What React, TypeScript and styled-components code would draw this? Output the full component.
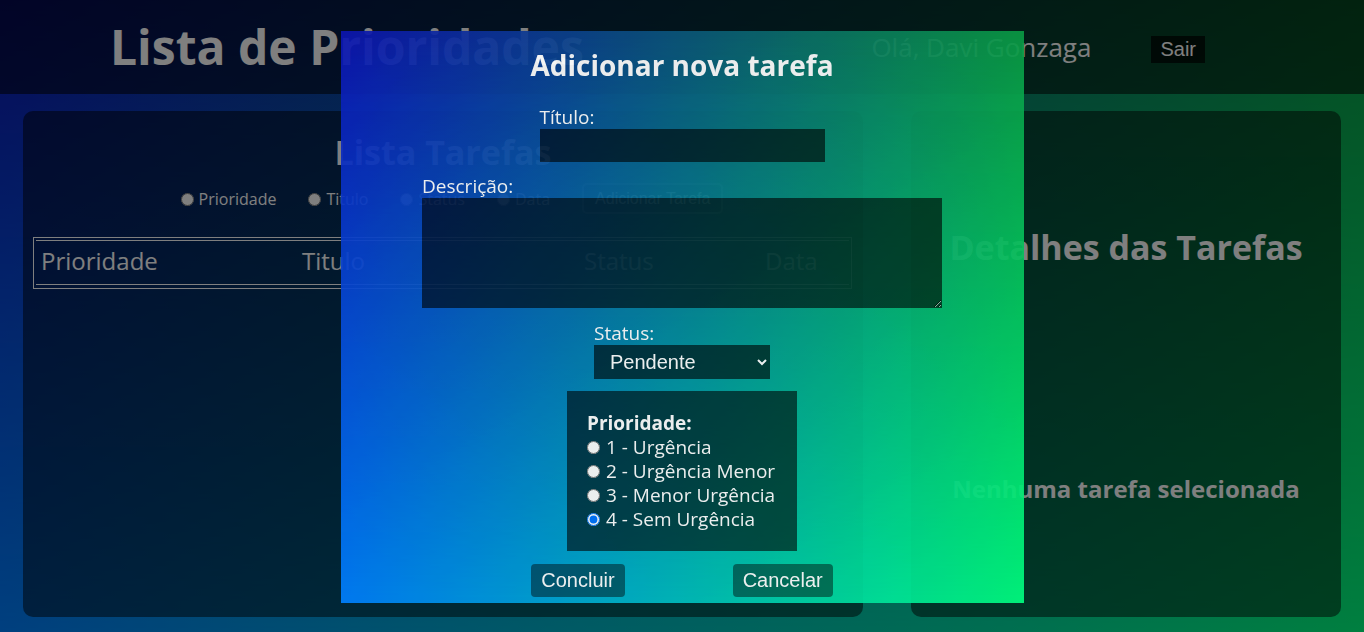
import React from 'react';
import styled, { createGlobalStyle, css } from 'styled-components';

const TL = '#0c14b0';
const TR = '#0a9a44';
const BL = '#0080ff';
const BR = '#00ff80';

const bilinear = css`
  position: relative;
  isolation: isolate;
  background: linear-gradient(to right, ${BL}, ${BR});
  &::before {
    content: '';
    position: absolute;
    inset: 0;
    z-index: -1;
    pointer-events: none;
    background: linear-gradient(to right, ${TL}, ${TR});
    -webkit-mask-image: linear-gradient(to bottom, #000, transparent);
    mask-image: linear-gradient(to bottom, #000, transparent);
  }
`;

const Global = createGlobalStyle`
  html, body { margin: 0; padding: 0; height: 100%; }
  body { font-family: "Open Sans", "Noto Sans", sans-serif; overflow: hidden; color: #fff; }
  * { box-sizing: border-box; }
`;

const Page = styled.div`
  ${bilinear};
  height: 100vh;
  display: flex;
  flex-direction: column;
`;

const Header = styled.header`
  height: 94px;
  flex: none;
  display: flex;
  align-items: center;
  padding: 0 159px 0 110px;
  background: rgba(0, 0, 0, 0.55);
`;

const AppTitle = styled.h1`
  margin: 0;
  font-size: 48px;
  font-weight: 700;
  line-height: 1.2;
`;

const UserArea = styled.div`
  margin-left: auto;
  display: flex;
  align-items: center;
  gap: 60px;
`;

const UserName = styled.span`
  font-size: 26px;
`;

const SmallButton = styled.button`
  font-family: "Liberation Sans", Arial, sans-serif;
  font-size: 20px;
  color: #fff;
  background: rgba(0, 0, 0, 0.7);
  border: none;
  height: 27px;
  padding: 0 9px;
  margin-top: 4px;
`;

const Main = styled.main`
  flex: 1;
  display: flex;
  gap: 48px;
  padding: 17px 23px 15px;
`;

const Panel = styled.section<{ $w: number }>`
  width: ${(p) => p.$w}px;
  flex: none;
  background: rgba(0, 0, 0, 0.5);
  border-radius: 10px;
  display: flex;
  flex-direction: column;
  align-items: center;
`;

const PanelTitle = styled.h2<{ $top: number }>`
  margin: ${(p) => p.$top}px 0 0;
  font-size: 34px;
  font-weight: 700;
  line-height: 46px;
`;

const SortRow = styled.div`
  margin: 8px 0 0 18px;
  display: flex;
  align-items: center;
  gap: 32px;
  font-size: 16px;
`;

const SortOption = styled.label`
  display: flex;
  align-items: center;
  gap: 5px;
  padding-top: 1px;
  input { margin: 0; width: 13px; height: 13px; }
`;

const OutlineButton = styled.button`
  font-family: "Liberation Sans", Arial, sans-serif;
  font-size: 16px;
  color: #fff;
  height: 31px;
  padding: 0 11px;
  border: 2px solid rgba(255, 255, 255, 0.35);
  border-radius: 5px;
  background: rgba(0, 0, 0, 0.3);
`;

const Table = styled.div`
  align-self: stretch;
  margin: 23px 11px 0 10px;
  border: 1px solid #fff;
  padding: 2px 2px 3px;
`;

const HeadRow = styled.div`
  border-top: 1px solid #fff;
  border-bottom: 1px solid #fff;
  display: grid;
  grid-template-columns: 261px 282px 181px 1fr;
  padding: 0 0 5px 5px;
  height: 45px;
  align-items: center;
  font-size: 24px;
`;

const EmptyText = styled.p`
  margin: 202px 0 0;
  font-size: 24px;
  font-weight: 700;
  line-height: 33px;
`;

const Backdrop = styled.div`
  position: fixed;
  inset: 0;
  padding-top: 2px;
  background: rgba(0, 0, 0, 0.5);
  display: flex;
  align-items: center;
  justify-content: center;
`;

const Modal = styled.div`
  ${bilinear};
  width: 683px;
  opacity: 0.92;
  display: flex;
  flex-direction: column;
  align-items: center;
  padding: 15px 0 6px;
`;

const ModalTitle = styled.h2`
  margin: 0 0 21px;
  font-size: 28px;
  font-weight: 700;
  line-height: 38px;
`;

const Field = styled.div<{ $gap?: number }>`
  display: flex;
  flex-direction: column;
  align-items: flex-start;
  margin-top: ${(p) => p.$gap ?? 0}px;
`;

const FieldLabel = styled.label`
  font-size: 19px;
  line-height: 24px;
`;

const darkField = css`
  background: rgba(0, 0, 0, 0.62);
  border: none;
  color: #fff;
  outline: none;
`;

const TextInput = styled.input`
  ${darkField};
  width: 285px;
  height: 33px;
`;

const TextArea = styled.textarea`
  ${darkField};
  width: 520px;
  height: 110px;
  display: block;
`;

const Select = styled.select`
  ${darkField};
  width: 176px;
  height: 34px;
  font-family: "Liberation Sans", Arial, sans-serif;
  font-size: 20px;
  padding: 0 4px 0 12px;
  option { background: #033; }
`;

const PriorityBox = styled.fieldset`
  margin: 12px 0 0;
  width: 230px;
  border: none;
  background: rgba(0, 0, 0, 0.6);
  padding: 20px;
  font-size: 19px;
  line-height: 24px;
`;

const PriorityTitle = styled.div`
  font-weight: 700;
`;

const PriorityOption = styled.label`
  display: flex;
  align-items: center;
  gap: 6px;
  white-space: nowrap;
  input { margin: 0; width: 13px; height: 13px; }
`;

const ButtonRow = styled.div`
  margin-top: 13px;
  display: flex;
  gap: 108px;
`;

const ModalButton = styled.button`
  font-family: "Liberation Sans", Arial, sans-serif;
  font-size: 20px;
  color: #fff;
  height: 33px;
  padding: 0 10px;
  border: none;
  border-radius: 4px;
  background: rgba(0, 0, 0, 0.45);
`;

export default function App() {
  return (
    <>
      <Global />
      <Page>
        <Header>
          <AppTitle>Lista de Prioridades</AppTitle>
          <UserArea>
            <UserName>Olá, Davi Gonzaga</UserName>
            <SmallButton>Sair</SmallButton>
          </UserArea>
        </Header>
        <Main>
          <Panel $w={840}>
            <PanelTitle $top={18}>Lista Tarefas</PanelTitle>
            <SortRow>
              {['Prioridade', 'Titulo', 'Status', 'Data'].map((s) => (
                <SortOption key={s}>
                  <input type="radio" name="sort" />
                  {s}
                </SortOption>
              ))}
              <OutlineButton>Adicionar Tarefa</OutlineButton>
            </SortRow>
            <Table>
              <HeadRow>
                <span>Prioridade</span>
                <span>Titulo</span>
                <span>Status</span>
                <span>Data</span>
              </HeadRow>
            </Table>
          </Panel>
          <Panel $w={430}>
            <PanelTitle $top={113}>Detalhes das Tarefas</PanelTitle>
            <EmptyText>Nenhuma tarefa selecionada</EmptyText>
          </Panel>
        </Main>
        <Backdrop>
          <Modal>
            <ModalTitle>Adicionar nova tarefa</ModalTitle>
            <Field>
              <FieldLabel htmlFor="titulo">Título:</FieldLabel>
              <TextInput id="titulo" />
            </Field>
            <Field $gap={12}>
              <FieldLabel htmlFor="descricao">Descrição:</FieldLabel>
              <TextArea id="descricao" />
            </Field>
            <Field $gap={13}>
              <FieldLabel htmlFor="status">Status:</FieldLabel>
              <Select id="status" defaultValue="pendente">
                <option value="pendente">Pendente</option>
                <option value="andamento">Em andamento</option>
                <option value="concluida">Concluída</option>
              </Select>
            </Field>
            <PriorityBox>
              <PriorityTitle>Prioridade:</PriorityTitle>
              {['1 - Urgência', '2 - Urgência Menor', '3 - Menor Urgência', '4 - Sem Urgência'].map((p, i) => (
                <PriorityOption key={p}>
                  <input type="radio" name="prioridade" defaultChecked={i === 3} />
                  {p}
                </PriorityOption>
              ))}
            </PriorityBox>
            <ButtonRow>
              <ModalButton>Concluir</ModalButton>
              <ModalButton>Cancelar</ModalButton>
            </ButtonRow>
          </Modal>
        </Backdrop>
      </Page>
    </>
  );
}
